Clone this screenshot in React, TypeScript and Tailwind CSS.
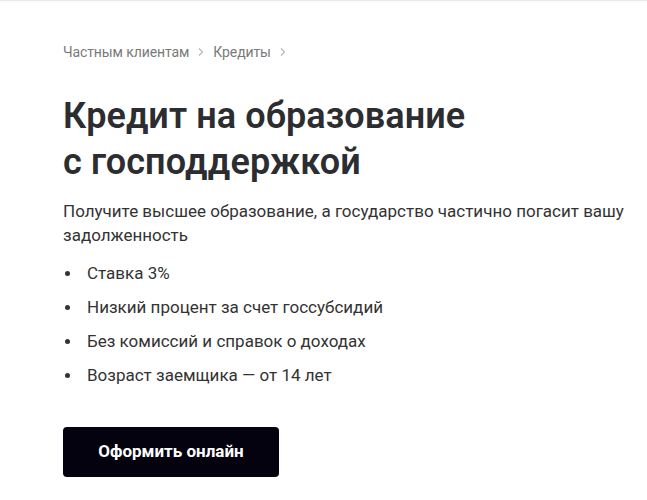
import React from 'react';

const features = [
  'Ставка 3%',
  'Низкий процент за счет госсубсидий',
  'Без комиссий и справок о доходах',
  'Возраст заемщика — от 14 лет',
];

function Chevron() {
  return (
    <svg width="8" height="10" viewBox="0 0 8 10" fill="none" className="mx-[8px]">
      <path d="M2 1.5L5.5 5L2 8.5" stroke="#b8b8b8" strokeWidth="1.2" />
    </svg>
  );
}

export default function App() {
  return (
    <div className="min-h-[500px] w-[647px] bg-white font-['Roboto',sans-serif] text-[#333333]">
      <div className="h-[3px] border-t border-[#e9e9e9] bg-[#fafafa]" />
      <div className="pl-[63px] pr-[20px] pt-[39px]">
        <nav className="flex items-center text-[14px] leading-[20px] tracking-[-0.1px] text-[#7a7a7a]">
          <span>Частным клиентам</span>
          <Chevron />
          <span>Кредиты</span>
          <Chevron />
        </nav>

        <h1 className="mt-[31px] text-[36px] font-semibold leading-[46px] tracking-[0.1px] text-[#2b2d30]">
          Кредит на образование
          <br />
          с господдержкой
        </h1>

        <p className="mt-[14px] text-[17px] leading-[24px] text-[#333333]">
          Получите высшее образование, а государство частично погасит вашу задолженность
        </p>

        <ul className="mt-[14px] flex flex-col gap-[10px]">
          {features.map(f => (
            <li key={f} className="flex items-center text-[17px] leading-[24px]">
              <span className="mr-[17px] ml-[2px] h-[5px] w-[5px] rounded-full bg-[#333333]" />
              {f}
            </li>
          ))}
        </ul>

        <button className="mt-[40px] h-[50px] w-[216px] rounded-[4px] bg-[#04020f] text-[17px] font-bold text-white">
          Оформить онлайн
        </button>
      </div>
    </div>
  );
}
